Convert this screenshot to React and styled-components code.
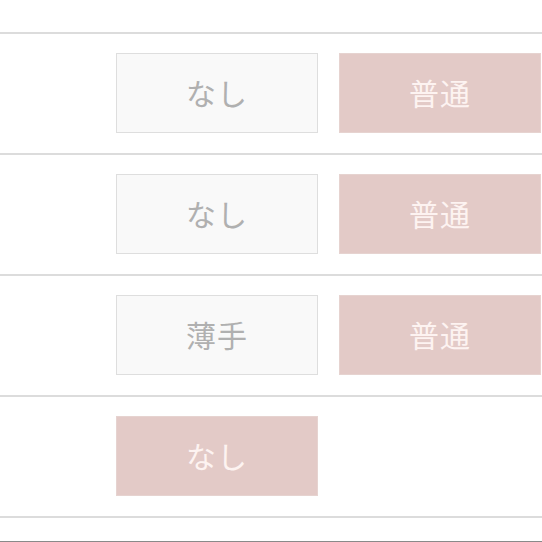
import React from "react";
import styled, { createGlobalStyle } from "styled-components";

const GlobalStyle = createGlobalStyle`
  html, body {
    margin: 0;
    padding: 0;
    background: #ffffff;
  }
  body {
    font-family: "Noto Sans CJK JP", "Noto Sans", sans-serif;
  }
`;

const rows = [
  { options: [{ label: "なし" }, { label: "普通", active: true }] },
  { options: [{ label: "なし" }, { label: "普通", active: true }] },
  { options: [{ label: "薄手" }, { label: "普通", active: true }] },
  { options: [{ label: "なし", active: true }] },
];

const App = () => {
  return (
    <>
      <GlobalStyle />
      <Page>
        <List>
          {rows.map((row, i) => (
            <Row key={i}>
              {row.options.map((opt, j) => (
                <Option key={j} $active={opt.active}>
                  {opt.label}
                </Option>
              ))}
            </Row>
          ))}
        </List>
        <BottomEdge />
      </Page>
    </>
  );
};

export default App;

const Page = styled.div`
  width: 542px;
  height: 542px;
  overflow: hidden;
  display: flex;
  flex-direction: column;
  padding-top: 32px;
  box-sizing: border-box;
`;

const List = styled.div`
  border-top: 2px solid #dcdcdc;
  flex: 1;
`;

const Row = styled.div`
  display: flex;
  gap: 21px;
  padding: 19px 0 20px 116px;
  border-bottom: 2px solid #dcdcdc;
`;

const Option = styled.div`
  width: 202px;
  height: 80px;
  box-sizing: border-box;
  display: flex;
  align-items: center;
  justify-content: center;
  padding-bottom: 2px;
  font-size: 30px;
  letter-spacing: 1px;
  background: ${(p) => (p.$active ? "#e3cac7" : "#f9f9f9")};
  border: 1px solid ${(p) => (p.$active ? "#e6d3d0" : "#dedede")};
  color: ${(p) => (p.$active ? "#fdf3f1" : "#b0b0b0")};
`;

const BottomEdge = styled.div`
  height: 1px;
  background: #8a8a8a;
`;
